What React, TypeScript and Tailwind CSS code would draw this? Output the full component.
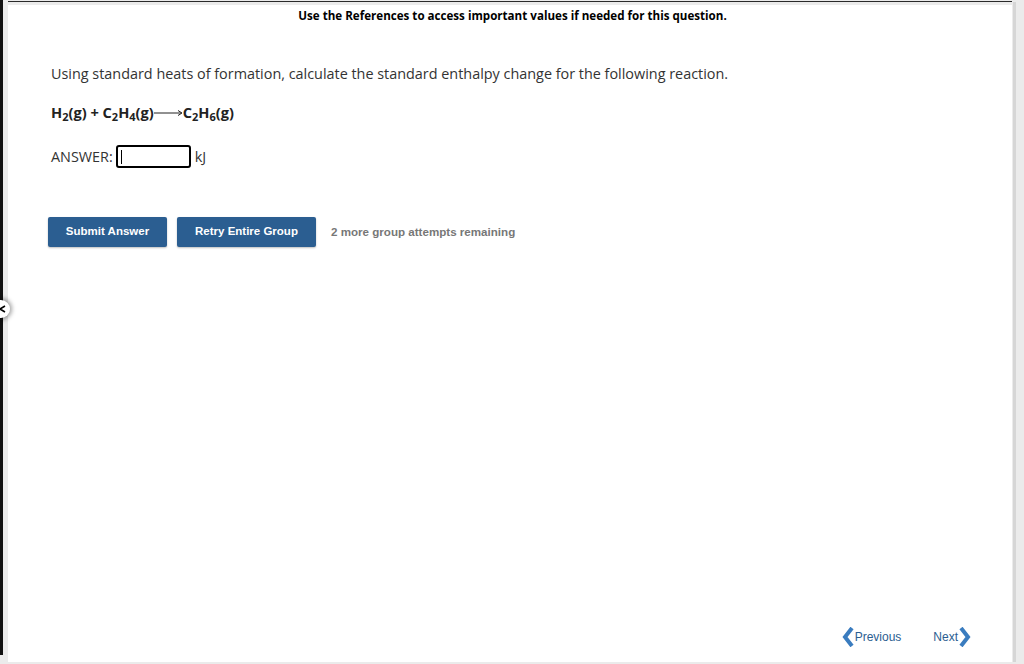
import React from "react";

function Chevron({ dir }: { dir: "left" | "right" }) {
  return (
    <svg width="12" height="20" viewBox="0 0 12 20" className="shrink-0">
      <path
        d={dir === "left" ? "M10 1 L3 10 L10 19" : "M2 1 L9 10 L2 19"}
        fill="none"
        stroke="#3a7cbf"
        strokeWidth="4"
        strokeLinejoin="miter"
      />
    </svg>
  );
}

export default function App() {
  return (
    <div className="relative w-[1024px] h-[664px] bg-[#ebebeb] overflow-hidden font-['Open_Sans',sans-serif]">
      <div className="flex h-full">
        {/* left dark rail */}
        <div className="w-[3px] h-[655px] bg-[#111]" />
        <div className="flex-1 flex flex-col pl-[5px] pt-[1px]">
          <div className="h-[1px] bg-[#2a2a2a] w-[1004px]" />
          <div className="flex">
            <div className="w-[1004px] h-[657px] mt-[3px] bg-white flex flex-col">
              <p className="text-center text-[11.6px] font-bold text-black mt-[3px] leading-[16px] ml-[5px]">
                Use the References to access important values if needed for this question.
              </p>

              <div className="pl-[43px] pt-[40px] text-[#333]">
                <p className="text-[14.4px] leading-[20px]">
                  Using standard heats of formation, calculate the standard enthalpy change for the following reaction.
                </p>
                <p className="text-[14.6px] font-bold mt-[18px] leading-[20px] text-[#222]">
                  H<sub className="text-[11px]">2</sub>(g) + C<sub className="text-[11px]">2</sub>H
                  <sub className="text-[11px]">4</sub>(g)
                  <span className="inline-block align-middle relative -top-[1px]">
                    <svg width="29" height="8" viewBox="0 0 29 8">
                      <line x1="0" y1="4" x2="27" y2="4" stroke="#222" strokeWidth="1" />
                      <path d="M24 1.5 L28 4 L24 6.5" fill="none" stroke="#222" strokeWidth="1" />
                    </svg>
                  </span>
                  C<sub className="text-[11px]">2</sub>H<sub className="text-[11px]">6</sub>(g)
                </p>
                <div className="flex items-center mt-[23px] text-[14.4px]">
                  <span>ANSWER:</span>
                  <div className="ml-[3px] w-[75px] h-[23px] border-2 border-black rounded-[3px] flex items-center pl-[3px]">
                    <div className="w-[1px] h-[14px] bg-black" />
                  </div>
                  <span className="ml-[4px]">kJ</span>
                </div>
              </div>

              <div className="flex items-center pl-[40px] mt-[49px] font-['Liberation_Sans',Arial,sans-serif]">
                <button className="h-[30px] w-[119px] bg-[#2b5e91] text-white text-[11.5px] font-bold rounded-[2px] shadow-[0_1px_2px_rgba(0,0,0,0.25)]">
                  Submit Answer
                </button>
                <button className="ml-[10px] h-[30px] w-[139px] bg-[#2b5e91] text-white text-[11.5px] font-bold rounded-[2px] shadow-[0_1px_2px_rgba(0,0,0,0.25)]">
                  Retry Entire Group
                </button>
                <span className="ml-[15px] text-[11.6px] font-bold text-[#777]">
                  2 more group attempts remaining
                </span>
              </div>

              <div className="flex-1" />

              <div className="flex items-center justify-end pr-[41px] pb-[15px] font-['Liberation_Sans',Arial,sans-serif] text-[12px] text-[#2b5e91]">
                <div className="flex items-center gap-[1px]">
                  <Chevron dir="left" />
                  <span>Previous</span>
                </div>
                <div className="flex items-center gap-[1px] ml-[32px]">
                  <span>Next</span>
                  <Chevron dir="right" />
                </div>
              </div>
            </div>
            <div className="w-[3px] h-[660px] bg-[#d6d6d6] ml-[1px]" />
          </div>
        </div>
      </div>

      {/* side toggle */}
      <div className="absolute left-[-8px] top-[300px] w-[18px] h-[18px] rounded-full bg-white shadow-[0_0_4px_2px_rgba(0,0,0,0.35)] flex items-center justify-end pr-[4px]">
        <svg width="7" height="8" viewBox="0 0 7 8">
          <path d="M6 1 L1 4 L6 7" fill="none" stroke="#000" strokeWidth="1.6" />
        </svg>
      </div>
    </div>
  );
}
